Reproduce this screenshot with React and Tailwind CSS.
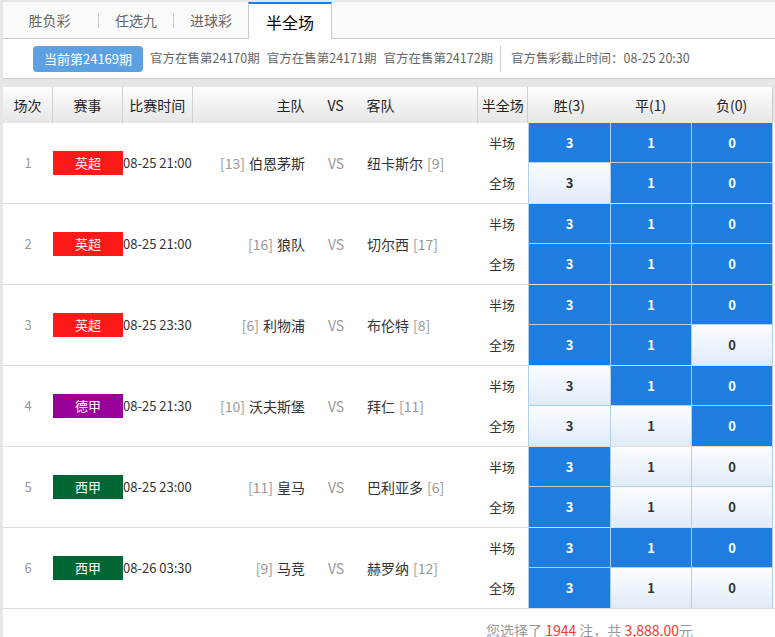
import React from "react";

const matches = [
  { no: 1, league: "英超", color: "bg-[#ff1a1a]", time: "08-25 21:00", hr: "13", home: "伯恩茅斯", away: "纽卡斯尔", ar: "9", sel: [[1, 1, 1], [0, 1, 1]] },
  { no: 2, league: "英超", color: "bg-[#ff1a1a]", time: "08-25 21:00", hr: "16", home: "狼队", away: "切尔西", ar: "17", sel: [[1, 1, 1], [1, 1, 1]] },
  { no: 3, league: "英超", color: "bg-[#ff1a1a]", time: "08-25 23:30", hr: "6", home: "利物浦", away: "布伦特", ar: "8", sel: [[1, 1, 1], [1, 1, 0]] },
  { no: 4, league: "德甲", color: "bg-[#990099]", time: "08-25 21:30", hr: "10", home: "沃夫斯堡", away: "拜仁", ar: "11", sel: [[0, 1, 1], [0, 0, 1]] },
  { no: 5, league: "西甲", color: "bg-[#006633]", time: "08-25 23:00", hr: "11", home: "皇马", away: "巴利亚多", ar: "6", sel: [[1, 0, 0], [1, 0, 0]] },
  { no: 6, league: "西甲", color: "bg-[#006633]", time: "08-26 03:30", hr: "9", home: "马竞", away: "赫罗纳", ar: "12", sel: [[1, 1, 1], [1, 0, 0]] },
];

const vals = ["3", "1", "0"];
const widths = ["w-[82px]", "w-[81px]", "w-[81px]"];

function Pick({ on, label, idx, last }) {
  return (
    <div
      className={`${widths[idx]} h-[40px] flex items-center justify-center border-r border-[#b3cfee] text-[13px] font-bold ${
        last ? "" : "border-b"
      } ${on ? "bg-[#1e7ddf] text-white" : "bg-linear-to-b from-[#fbfdff] to-[#e0ebf7] text-[#333]"}`}
    >
      {label}
    </div>
  );
}

function Row({ m }) {
  return (
    <div className="flex h-[81px] border-b border-[#dddddd] bg-white">
      <div className="w-[50px] flex items-center justify-center text-[13px] text-[#999]">{m.no}</div>
      <div className="w-[70px] flex items-center">
        <div className={`${m.color} w-[70px] h-[24px] flex items-center justify-center text-white text-[13px]`}>{m.league}</div>
      </div>
      <div className="w-[70px] flex items-center text-[13px] text-[#333] whitespace-nowrap">{m.time}</div>
      <div className="w-[124px] flex items-center justify-end pr-[12px] text-[14px] text-[#333] whitespace-nowrap">
        <span className="text-[#999] mr-[4px]">[{m.hr}]</span>
        {m.home}
      </div>
      <div className="w-[38px] flex items-center justify-center text-[14px] text-[#999]">VS</div>
      <div className="w-[124px] flex items-center pl-[12px] text-[14px] text-[#333] whitespace-nowrap">
        {m.away}
        <span className="text-[#999] ml-[4px]">[{m.ar}]</span>
      </div>
      <div className="w-[50px] flex flex-col border-r border-[#b3cfee] text-[13px] text-[#333]">
        <div className="h-[40px] flex items-center justify-end pr-[13px]">半场</div>
        <div className="h-[40px] flex items-center justify-end pr-[13px]">全场</div>
      </div>
      <div className="flex flex-col">
        {m.sel.map((r, ri) => (
          <div key={ri} className="flex">
            {r.map((on, ci) => (
              <Pick key={ci} on={on} label={vals[ci]} idx={ci} last={ri === 1} />
            ))}
          </div>
        ))}
      </div>
    </div>
  );
}

export default function App() {
  return (
    <div
      className="w-[775px] h-[637px] overflow-hidden bg-[#e6e6e6] pl-[3px] pt-[2px]"
      style={{ fontFamily: '"Noto Sans CJK SC", "Noto Sans", sans-serif' }}
    >
      {/* tabs */}
      <div className="flex h-[37px] bg-[#fafafa] border-b border-[#cccccc]">
        <div className="w-[95px] flex items-center justify-center text-[14px] text-[#666]">
          <span className="ml-[-2px]">胜负彩</span>
        </div>
        <div className="w-px h-[15px] bg-[#cccccc] self-center" />
        <div className="w-[74px] flex items-center justify-center text-[14px] text-[#666]">任选九</div>
        <div className="w-px h-[15px] bg-[#cccccc] self-center" />
        <div className="w-[74px] flex items-center justify-center text-[14px] text-[#666]">进球彩</div>
        <div className="w-[84px] h-[37px] flex items-center justify-center bg-white border-t-2 border-t-[#1e7ddf] border-x border-x-[#cccccc] text-[16px] text-black">
          半全场
        </div>
      </div>

      {/* issue bar */}
      <div className="flex items-center h-[40px] bg-white border-b border-[#cccccc] whitespace-nowrap text-[12.5px] text-[#666]">
        <div className="ml-[30px] h-[26px] w-[110px] rounded-[4px] bg-[#5ea1e3] text-white text-[13px] flex items-center justify-center">当前第24169期</div>
        <span className="ml-[7px]">官方在售第24170期</span>
        <span className="ml-[7px]">官方在售第24171期</span>
        <span className="ml-[7px]">官方在售第24172期</span>
        <div className="w-px h-[26px] bg-[#cccccc] ml-[7px]" />
        <span className="ml-[10px]">官方售彩截止时间：08-25 20:30</span>
        <span className="ml-auto mr-[-14px] text-[#ff8800]">+</span>
      </div>

      {/* table header */}
      <div className="mt-[8px] flex h-[36px] bg-linear-to-b from-[#fdfdfd] to-[#e6e6e6] text-[14px] text-[#222] border-r border-[#cccccc] w-[770px]">
        <div className="w-[50px] flex items-center justify-center border-r border-[#d0d0d0]">场次</div>
        <div className="w-[70px] flex items-center justify-center border-r border-[#d0d0d0]">赛事</div>
        <div className="w-[70px] flex items-center justify-center border-r border-[#d0d0d0]">比赛时间</div>
        <div className="w-[124px] flex items-center justify-end pr-[12px]">主队</div>
        <div className="w-[38px] flex items-center justify-center">VS</div>
        <div className="w-[124px] flex items-center pl-[12px] border-r border-[#d0d0d0]">客队</div>
        <div className="w-[50px] flex items-center justify-center border-r border-[#d0d0d0]">半全场</div>
        <div className="w-[82px] flex items-center justify-center">胜(3)</div>
        <div className="w-[81px] flex items-center justify-center">平(1)</div>
        <div className="w-[81px] flex items-center justify-center">负(0)</div>
      </div>

      {/* rows */}
      <div className="bg-white">
        {matches.map((m) => (
          <Row key={m.no} m={m} />
        ))}
        <div className="h-[40px] pl-[483px] pt-[11px] text-[14px] text-[#999] whitespace-nowrap leading-[20px]">
          您选择了 <span className="text-[#ff3333]">1944</span> 注，共 <span className="text-[#ff3333]">3,888.00</span>元
        </div>
      </div>
    </div>
  );
}
